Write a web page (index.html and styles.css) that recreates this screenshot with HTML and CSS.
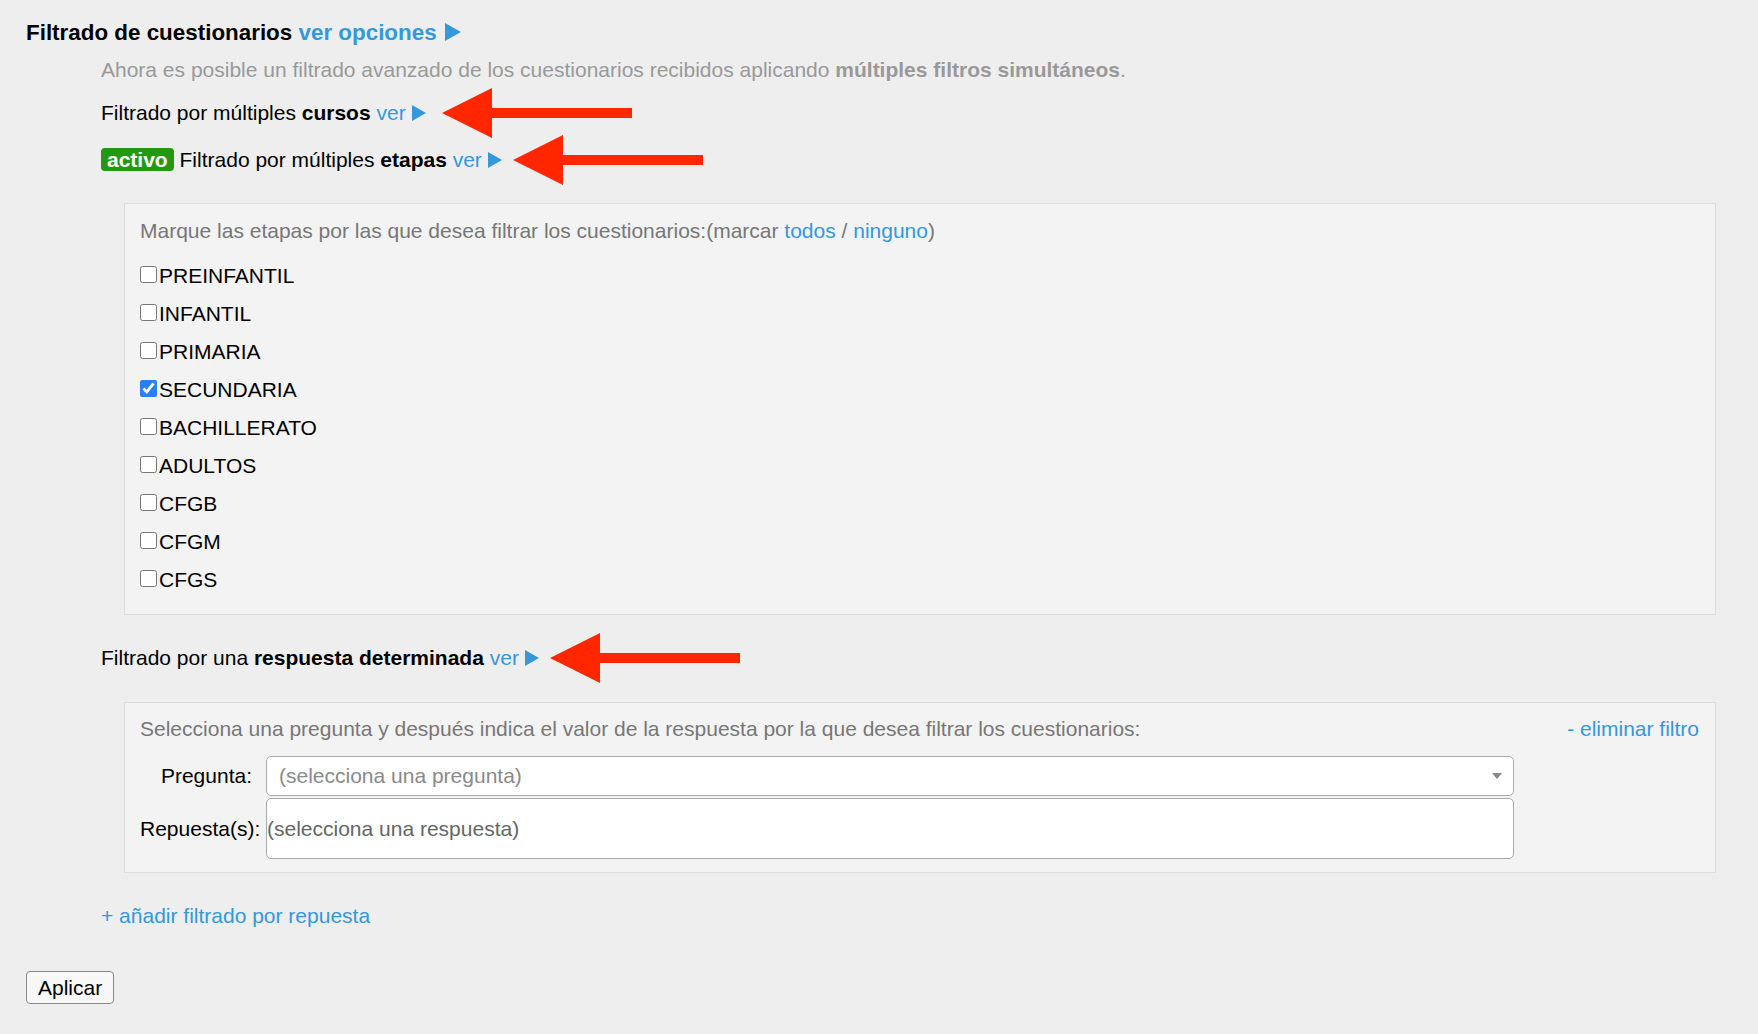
FILE: index.html
```html
<!DOCTYPE html>
<html lang="es">
<head>
    <meta charset="UTF-8">
    <meta name="viewport" content="width=device-width, initial-scale=1.0">
    <title>Filtrado de cuestionarios</title>
    <link rel="stylesheet" href="styles.css">
</head>
<body>
    <form id="filtroForm">
        <h2 class="titulo">Filtrado de cuestionarios <a href="#" class="enlace">ver opciones</a>
            <svg class="tri tri-grande" viewBox="0 0 16 18"><polygon points="0,0 16,9 0,18"/></svg>
        </h2>

        <div class="contenido">
            <p class="descripcion">Ahora es posible un filtrado avanzado de los cuestionarios recibidos aplicando <b>múltiples filtros simultáneos</b>.</p>

            <!-- filtro por cursos -->
            <div class="filtro-linea linea-cursos">
                <span>Filtrado por múltiples <b>cursos</b> <a href="#" class="enlace">ver</a> <svg class="tri" viewBox="0 0 14 16"><polygon points="0,0 14,8 0,16"/></svg></span>
                <svg class="flecha flecha-1" viewBox="0 0 190 50"><polygon points="0,25 50,0 50,20 190,20 190,30 50,30 50,50"/></svg>
            </div>

            <!-- filtro por etapas -->
            <div class="filtro-linea linea-etapas">
                <span><span class="activo">activo</span> Filtrado por múltiples <b>etapas</b> <a href="#" class="enlace">ver</a> <svg class="tri" viewBox="0 0 14 16"><polygon points="0,0 14,8 0,16"/></svg></span>
                <svg class="flecha flecha-2" viewBox="0 0 190 50"><polygon points="0,25 50,0 50,20 190,20 190,30 50,30 50,50"/></svg>
            </div>

            <div class="panel panel-etapas">
                <p class="instruccion">Marque las etapas por las que desea filtrar los cuestionarios:(marcar <a href="#" class="enlace">todos</a> / <a href="#" class="enlace">ninguno</a>)</p>
                <label class="opcion"><input type="checkbox" name="etapa" value="PREINFANTIL">PREINFANTIL</label>
                <label class="opcion"><input type="checkbox" name="etapa" value="INFANTIL">INFANTIL</label>
                <label class="opcion"><input type="checkbox" name="etapa" value="PRIMARIA">PRIMARIA</label>
                <label class="opcion"><input type="checkbox" name="etapa" value="SECUNDARIA" checked>SECUNDARIA</label>
                <label class="opcion"><input type="checkbox" name="etapa" value="BACHILLERATO">BACHILLERATO</label>
                <label class="opcion"><input type="checkbox" name="etapa" value="ADULTOS">ADULTOS</label>
                <label class="opcion"><input type="checkbox" name="etapa" value="CFGB">CFGB</label>
                <label class="opcion"><input type="checkbox" name="etapa" value="CFGM">CFGM</label>
                <label class="opcion"><input type="checkbox" name="etapa" value="CFGS">CFGS</label>
            </div>

            <!-- filtro por respuesta -->
            <div class="filtro-linea linea-respuesta">
                <span>Filtrado por una <b>respuesta determinada</b> <a href="#" class="enlace">ver</a> <svg class="tri" viewBox="0 0 14 16"><polygon points="0,0 14,8 0,16"/></svg></span>
                <svg class="flecha flecha-3" viewBox="0 0 190 50"><polygon points="0,25 50,0 50,20 190,20 190,30 50,30 50,50"/></svg>
            </div>

            <div class="panel panel-respuesta">
                <div class="cabecera-respuesta">
                    <span class="texto-gris">Selecciona una pregunta y después indica el valor de la respuesta por la que desea filtrar los cuestionarios:</span>
                    <a href="#" class="enlace">- eliminar filtro</a>
                </div>
                <div class="campos">
                    <span class="etiqueta etiqueta-pregunta">Pregunta:</span>
                    <div class="caja-select">
                        <span class="placeholder">(selecciona una pregunta)</span>
                        <b class="flecha-select"></b>
                    </div>
                    <span class="etiqueta">Repuesta(s):</span>
                    <div class="caja-multiple">
                        <span class="placeholder-multiple">(selecciona una respuesta)</span>
                    </div>
                </div>
            </div>

            <a href="#" class="enlace anadir">+ añadir filtrado por repuesta</a>
        </div>

        <button type="submit" class="boton">Aplicar</button>
    </form>
</body>
</html>
```

FILE: styles.css
```css
body {
    margin: 0;
    padding: 20px 26px;
    background-color: #eeeeee;
    color: #000;
    font-family: "Liberation Sans", Arial, Helvetica, sans-serif;
    font-size: 21px;
    line-height: 24px;
}
.enlace {
    color: #3498db;
    text-decoration: none;
}
.tri {
    width: 14px;
    height: 16px;
    fill: #3498db;
    vertical-align: -1px;
}
.titulo {
    margin: 0;
    font-size: 22.4px;
    line-height: 26px;
    font-weight: bold;
}
.tri-grande {
    width: 16px;
    height: 18px;
    margin-left: 2px;
    vertical-align: -1px;
}
.contenido {
    margin-left: 75px;
}
.descripcion {
    margin: 12px 0 0;
    color: #999;
}
.filtro-linea {
    display: flex;
    align-items: center;
    height: 24px;
}
.linea-cursos {
    margin-top: 19px;
}
.linea-etapas {
    margin-top: 23px;
}
.linea-respuesta {
    margin-top: 31px;
}
.flecha {
    flex: none;
    width: 190px;
    height: 50px;
    fill: #ff2600;
}
.flecha-1 {
    margin-left: 16px;
}
.flecha-2 {
    margin-left: 11px;
}
.flecha-3 {
    margin-left: 11px;
}
.activo {
    display: inline-block;
    background-color: #229911;
    color: #fff;
    font-weight: bold;
    padding: 0 6px;
    border-radius: 4px;
    line-height: 23px;
}
.panel {
    margin: 0 16px 0 23px;
    background-color: #f3f3f3;
    border: 1px solid #dddddd;
}
.panel-etapas {
    margin-top: 31px;
    padding: 15px;
}
.instruccion {
    margin: 0 0 14px;
    color: #777;
}
.texto-gris {
    color: #777;
}
.opcion {
    display: flex;
    align-items: center;
    height: 38px;
}
.opcion input {
    width: 17px;
    height: 17px;
    margin: -3px 2px 0 0;
    accent-color: #2b7ff6;
}
.panel-respuesta {
    margin-top: 32px;
    padding: 14px 16px 13px 15px;
}
.cabecera-respuesta {
    display: flex;
    justify-content: space-between;
}
.campos {
    display: grid;
    grid-template-columns: 126px 1248px;
    row-gap: 2px;
    align-items: center;
    margin-top: 15px;
}
.etiqueta {
    white-space: nowrap;
}
.etiqueta-pregunta {
    text-align: right;
    padding-right: 14px;
}
.caja-select {
    display: flex;
    align-items: center;
    justify-content: space-between;
    height: 38px;
    padding: 0 11px 0 12px;
    background-color: #fff;
    border: 1px solid #aaa;
    border-radius: 5px;
}
.placeholder {
    color: #8a8a8a;
}
.flecha-select {
    width: 0;
    height: 0;
    border-left: 5px solid transparent;
    border-right: 5px solid transparent;
    border-top: 6px solid #888;
}
.caja-multiple {
    display: flex;
    align-items: center;
    height: 59px;
    background-color: #fff;
    border: 1px solid #aaa;
    border-radius: 5px;
}
.placeholder-multiple {
    color: #666;
}
.anadir {
    display: block;
    margin-top: 31px;
}
.boton {
    display: block;
    margin-top: 43px;
    height: 33px;
    padding: 0 11px;
    font-family: "Liberation Sans", Arial, Helvetica, sans-serif;
    font-size: 21px;
    color: #000;
    background-color: #f8f8f8;
    border: 1px solid #888;
    border-radius: 4px;
}
```
